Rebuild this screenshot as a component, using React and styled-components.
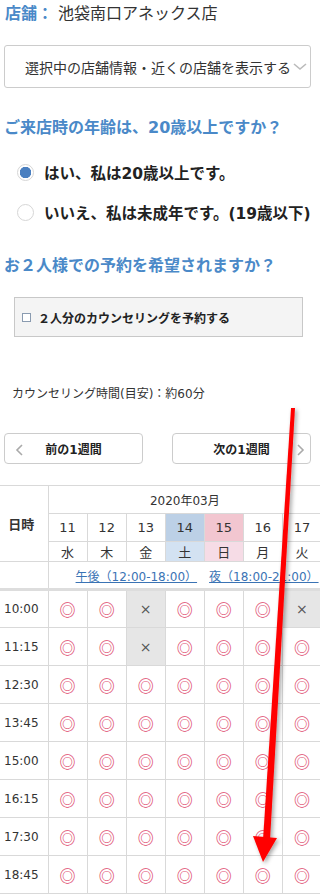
import styled, { createGlobalStyle } from 'styled-components'

const GlobalStyle = createGlobalStyle`
  body {
    margin: 0;
    background: #fff;
    color: #333;
    font-family: "DejaVu Sans", "Noto Sans CJK JP", sans-serif;
  }
`

const Page = styled.div`
  position: relative;
  width: 320px;
  height: 896px;
  overflow: hidden;
  padding-top: 4px;
  box-sizing: border-box;
`

const StoreLine = styled.div`
  padding-left: 5px;
  font-size: 16px;
  line-height: 20px;
  color: #333;
  white-space: nowrap;
`

const Blue = styled.span`
  color: #4a89c8;
  font-weight: bold;
`

const SelectBox = styled.div`
  margin: 21px 0 0 4px;
  width: 307px;
  height: 43px;
  box-sizing: border-box;
  border: 1px solid #ccc;
  border-radius: 3px;
  display: flex;
  align-items: center;
  padding-left: 20px;
  font-size: 14px;
  white-space: nowrap;
  color: #333;
`

const Heading = styled.h2`
  margin: ${p => p.$top}px 0 0;
  padding-left: 4px;
  font-size: 16px;
  line-height: 22px;
  font-weight: bold;
  color: #4a89c8;
  white-space: nowrap;
`

const RadioRow = styled.label`
  display: flex;
  align-items: center;
  gap: 10px;
  height: 40px;
  padding-left: 17px;
  font-size: 15.5px;
  font-weight: bold;
  color: #222;
  white-space: nowrap;
  &:first-of-type {
    margin-top: 13px;
  }
`

const RadioDot = styled.span`
  flex: none;
  width: 17px;
  height: 17px;
  box-sizing: border-box;
  border-radius: 50%;
  border: 1px solid #d6d6d6;
  background: ${p => (p.$on ? 'radial-gradient(circle, #4a7fc0 0 5.5px, #fff 6px)' : '#fff')};
`

const CheckPanel = styled.div`
  margin: 20px 0 0 14px;
  width: 289px;
  height: 40px;
  box-sizing: border-box;
  background: #f4f4f4;
  border: 1px solid #c8c8c8;
  display: flex;
  align-items: center;
  padding-left: 7px;
  gap: 7px;
  font-size: 12px;
  font-weight: bold;
  color: #222;
`

const CheckBox = styled.span`
  width: 9px;
  height: 9px;
  box-sizing: border-box;
  border: 1px solid #8a9bb0;
  background: #fff;
`

const Duration = styled.div`
  margin-top: 48px;
  padding-left: 12px;
  font-size: 12px;
  line-height: 18px;
  color: #333;
`

const WeekNav = styled.div`
  margin: 30px 0 0 4px;
  width: 307px;
  display: flex;
  justify-content: space-between;
`

const WeekButton = styled.button`
  position: relative;
  width: 139px;
  height: 31px;
  box-sizing: border-box;
  border: 1px solid #ccc;
  border-radius: 4px;
  background: #fff;
  font-family: inherit;
  font-size: 12px;
  font-weight: bold;
  color: #222;
  padding: 0;
  display: flex;
  align-items: center;
  justify-content: center;
  svg {
    position: absolute;
    top: 9px;
    ${p => (p.$next ? 'right: 4px;' : 'left: 9px;')}
  }
`

const Table = styled.table`
  margin-top: 21px;
  width: 322px;
  border-collapse: collapse;
  table-layout: fixed;
  font-size: 12px;
  color: #333;
  td, th {
    border: 1px solid #d9d9d9;
    padding: 0;
    text-align: center;
    font-weight: normal;
  }
  tr > :first-child {
    border-left: none;
  }
`

const Corner = styled.th`
  && {
    font-weight: bold;
    font-size: 13px;
    padding-right: 5px;
  }
`

const MonthRow = styled.tr`
  height: 28px;
`

const DateCell = styled.td`
  height: 27px;
  font-size: 13px;
  background: ${p => p.$bg || '#fff'};
`

const DayCell = styled.td`
  height: 19px;
  font-size: 13px;
  background: ${p => p.$bg || '#fff'};
`

const LinkRow = styled.tr`
  height: 28px;
  td {
    border-bottom: 3px solid #ddd;
  }
`

const PeriodLink = styled.a`
  color: #3a73b4;
  text-decoration: underline;
  font-size: 12px;
  white-space: nowrap;
  margin-right: 12px;
`

const LinkCell = styled.td`
  && {
    text-align: left;
    padding-left: 27px;
    white-space: nowrap;
    overflow: hidden;
  }
`

const SlotRow = styled.tr`
  height: 38px;
`

const TimeCell = styled.td`
  && {
    text-align: left;
    padding-left: 4px;
    font-size: 12px;
  }
`

const Slot = styled.td`
  background: ${p => (p.$full ? '#e6e6e6' : '#fff')};
  color: ${p => (p.$full ? '#555' : '#de4a6e')};
  font-family: ${p => (p.$full ? '"DejaVu Sans", sans-serif' : '"Noto Sans CJK JP", sans-serif')};
  font-size: ${p => (p.$full ? '14px' : '16px')};
  && {
    font-weight: ${p => (p.$full ? 'normal' : 'bold')};
  }
`

const Arrow = styled.svg`
  position: absolute;
  left: 0;
  top: 0;
  pointer-events: none;
`

const dates = [
  { d: 11, w: '水' },
  { d: 12, w: '木' },
  { d: 13, w: '金' },
  { d: 14, w: '土', top: '#bcd0e6', low: '#d3e2f2' },
  { d: 15, w: '日', top: '#f2c6d0', low: '#f6dce6' },
  { d: 16, w: '月' },
  { d: 17, w: '火' },
]

const times = ['10:00', '11:15', '12:30', '13:45', '15:00', '16:15', '17:30', '18:45']
const full = { '10:00': [2, 6], '11:15': [2] }

function Chevron({ dir }) {
  const d = dir === 'left' ? 'M8 2 L3 7 L8 12' : 'M3 2 L8 7 L3 12'
  return (
    <svg width="11" height="14" viewBox="0 0 11 14">
      <path d={d} fill="none" stroke="#aaa" strokeWidth="1.6" />
    </svg>
  )
}

export default function App() {
  return (
    <Page>
      <GlobalStyle />
      <StoreLine><Blue>店舗：</Blue> 池袋南口アネックス店</StoreLine>
      <SelectBox>
        選択中の店舗情報・近くの店舗を表示する
        <svg width="16" height="10" viewBox="0 0 16 10" style={{ marginLeft: 1 }}>
          <path d="M2 2 L8 7 L14 2" fill="none" stroke="#bbb" strokeWidth="1.6" />
        </svg>
      </SelectBox>

      <Heading $top={29}>ご来店時の年齢は、20歳以上ですか？</Heading>
      <RadioRow><RadioDot $on />はい、私は20歳以上です。</RadioRow>
      <RadioRow><RadioDot />いいえ、私は未成年です。(19歳以下)</RadioRow>

      <Heading $top={23}>お２人様での予約を希望されますか？</Heading>
      <CheckPanel><CheckBox />２人分のカウンセリングを予約する</CheckPanel>

      <Duration>カウンセリング時間(目安)：約60分</Duration>

      <WeekNav>
        <WeekButton><Chevron dir="left" />前の1週間</WeekButton>
        <WeekButton $next>次の1週間<Chevron dir="right" /></WeekButton>
      </WeekNav>

      <Table>
        <colgroup>
          <col style={{ width: 48 }} />
          {dates.map(x => <col key={x.d} style={{ width: 39 }} />)}
        </colgroup>
        <tbody>
          <MonthRow>
            <Corner rowSpan={3}>日時</Corner>
            <td colSpan={7}>2020年03月</td>
          </MonthRow>
          <tr>
            {dates.map(x => <DateCell key={x.d} $bg={x.top}>{x.d}</DateCell>)}
          </tr>
          <tr>
            {dates.map(x => <DayCell key={x.d} $bg={x.low}>{x.w}</DayCell>)}
          </tr>
          <LinkRow>
            <td />
            <LinkCell colSpan={7}>
              <PeriodLink href="#">午後（12:00-18:00）</PeriodLink>
              <PeriodLink href="#">夜（18:00-21:00）</PeriodLink>
            </LinkCell>
          </LinkRow>
          {times.map(t => (
            <SlotRow key={t}>
              <TimeCell>{t}</TimeCell>
              {dates.map((x, i) => {
                const isFull = (full[t] || []).includes(i)
                return <Slot key={x.d} $full={isFull}>{isFull ? '×' : '◎'}</Slot>
              })}
            </SlotRow>
          ))}
        </tbody>
      </Table>

      <Arrow width="320" height="896" viewBox="0 0 320 896">
        <defs>
          <filter id="sh" x="-50%" y="-10%" width="200%" height="120%">
            <feDropShadow dx="2" dy="2" stdDeviation="2" floodColor="#000" floodOpacity="0.35" />
          </filter>
        </defs>
        <g filter="url(#sh)" fill="#ff0000">
          <polygon points="291,408 295,408 270,840 263,840" />
          <polygon points="253,836 277,838 263,862" />
        </g>
      </Arrow>
    </Page>
  )
}
